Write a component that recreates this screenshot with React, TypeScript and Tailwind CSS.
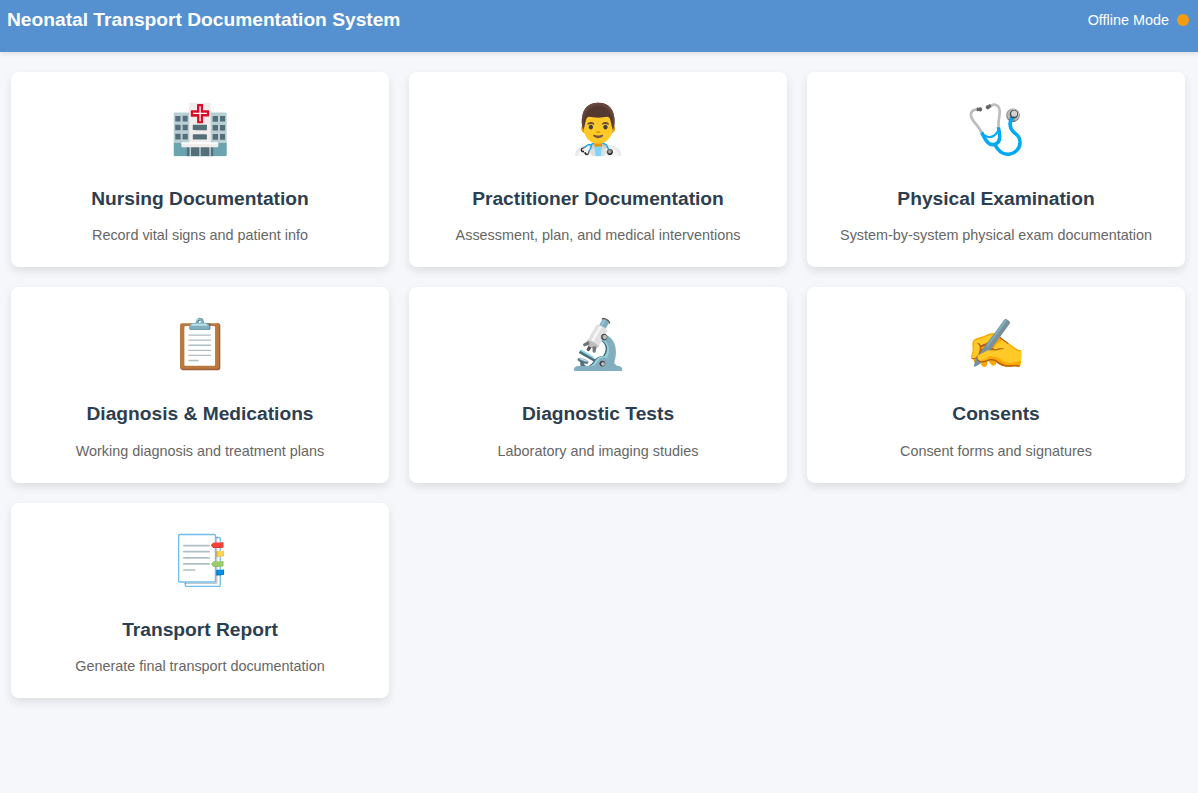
const modules = [
  { icon: "🏥", title: "Nursing Documentation", text: "Record vital signs and patient info" },
  { icon: "👨‍⚕️", title: "Practitioner Documentation", text: "Assessment, plan, and medical interventions" },
  { icon: "🩺", title: "Physical Examination", text: "System-by-system physical exam documentation" },
  { icon: "📋", title: "Diagnosis & Medications", text: "Working diagnosis and treatment plans" },
  { icon: "🔬", title: "Diagnostic Tests", text: "Laboratory and imaging studies" },
  { icon: "✍️", title: "Consents", text: "Consent forms and signatures" },
  { icon: "📑", title: "Transport Report", text: "Generate final transport documentation" },
];

function Header() {
  return (
    <header className="flex h-[52px] items-start justify-between bg-[#5591d0] pt-[8px] pr-[9px] pl-[7px] text-white shadow-[0_2px_5px_rgba(0,0,0,0.1)]">
      <h1 className="text-[19.2px] leading-[23px] font-bold">Neonatal Transport Documentation System</h1>
      <div className="flex items-center gap-2 text-[14.4px] leading-[24px]">
        <span>Offline Mode</span>
        <span className="size-3 rounded-full bg-[#f39c12]" />
      </div>
    </header>
  );
}

export default function App() {
  return (
    <div className="min-h-screen bg-[#f5f7fa] font-['Liberation_Sans',Arial,sans-serif]">
      <Header />
      <main className="grid grid-cols-3 gap-x-5 gap-y-[20px] pt-5 pr-[13px] pl-[11px]">
        {modules.map((m) => (
          <section
            key={m.title}
            className="flex h-[195.36px] flex-col items-center rounded-lg bg-white pt-5 text-center shadow-[0_4px_10px_rgba(0,0,0,0.1)]"
          >
            <div className="h-[77px] text-[48px] leading-[75px]">
              <span className="inline-block scale-[1.01]">{m.icon}</span>
            </div>
            <h2 className="mt-[14px] text-[19.2px] leading-[31px] font-bold text-[#2c3e50]">{m.title}</h2>
            <p className="mt-[10.25px] text-[14.4px] leading-[23px] text-[#666]">{m.text}</p>
          </section>
        ))}
      </main>
    </div>
  );
}
